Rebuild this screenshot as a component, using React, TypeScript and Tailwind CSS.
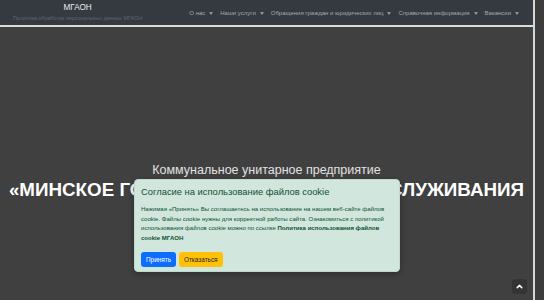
import { ChevronUp } from "lucide-react";

const navItems = [
  "О нас",
  "Наши услуги",
  "Обращения граждан и юридических лиц",
  "Справочная информация",
  "Вакансии",
];

function Caret() {
  return (
    <svg width="4" height="3" viewBox="0 0 10 6" className="ml-[4px] inline-block">
      <path d="M0 0h10L5 6z" fill="currentColor" />
    </svg>
  );
}

export default function App() {
  return (
    <div
      className="relative flex h-[300px] w-[544px] overflow-hidden bg-[#3e3e3e]"
      style={{ fontFamily: '"Liberation Sans", Arial, sans-serif' }}
    >
      <div className="flex w-[533px] flex-col">
        {/* Navbar */}
        <header className="box-content flex h-[25px] items-center justify-between border-b-2 border-[#dcdcdc] bg-[#343a40] pl-[13px] pr-[14px]">
          <div className="flex flex-col items-center">
            <span className="text-[8.2px] leading-[10px] text-[#e9ecef]">МГАОН</span>
            <span className="mt-[2px] text-[5.4px] leading-[7px] text-[#5f656b]">
              Политика обработки персональных данных МГАОН
            </span>
          </div>
          <nav className="flex items-center gap-[7px] pt-[1px] text-[6px] text-[#a4a7aa]">
            {navItems.map((item) => (
              <span key={item} className="flex items-center whitespace-nowrap">
                {item}
                <Caret />
              </span>
            ))}
          </nav>
        </header>

        {/* Hero */}
        <main className="flex flex-1 flex-col items-center bg-[#404040] pt-[135px] text-center">
          <p className="text-[12.5px] leading-[16px] text-[#e2e2e2]">
            Коммунальное унитарное предприятие
          </p>
          <h1 className="mt-[1px] whitespace-nowrap text-[18.8px] font-bold leading-[22px] text-white">
            «МИНСКОЕ ГОРОДСКОЕ АГЕНТСТВО ОБСЛУЖИВАНИЯ
          </h1>
        </main>
      </div>
      <div className="w-[2px] bg-[#d6d6d6]" />
      <div className="flex-1 bg-[#3c3c3c]" />

      {/* Cookie consent */}
      <div className="absolute left-[134px] top-[179px] h-[93px] w-[266px] rounded-[4px] border border-[#badbcc] bg-[#d1e7dd] px-[6px] pt-[5px] text-[#0f5132] shadow-[0_2px_6px_rgba(0,0,0,0.3)]">
        <h2 className="text-[9.4px] leading-[13px]">Согласие на использование файлов cookie</h2>
        <p className="mt-[7px] text-[6.05px] leading-[9.6px]">
          Нажимая «Принять» Вы соглашаетесь на использование на нашем веб-сайте файлов
          cookie. Файлы cookie нужны для корректной работы сайта. Ознакомиться с политикой
          использования файлов cookie можно по ссылке{" "}
          <b>Политика использования файлов cookie МГАОН</b>
        </p>
        <div className="mt-[9px] flex gap-[3px]">
          <button className="h-[15px] rounded-[3px] bg-[#0d6efd] px-[5px] text-[6.4px] text-white">
            Принять
          </button>
          <button className="h-[15px] rounded-[3px] bg-[#ffc107] px-[5px] text-[6.4px] text-[#212529]">
            Отказаться
          </button>
        </div>
      </div>

      {/* Back to top */}
      <div className="absolute left-[512px] top-[279px] flex h-[15px] w-[15px] items-center justify-center rounded-[3px] bg-[#343434]">
        <ChevronUp className="h-[9px] w-[9px] text-white" strokeWidth={4} />
      </div>
    </div>
  );
}
